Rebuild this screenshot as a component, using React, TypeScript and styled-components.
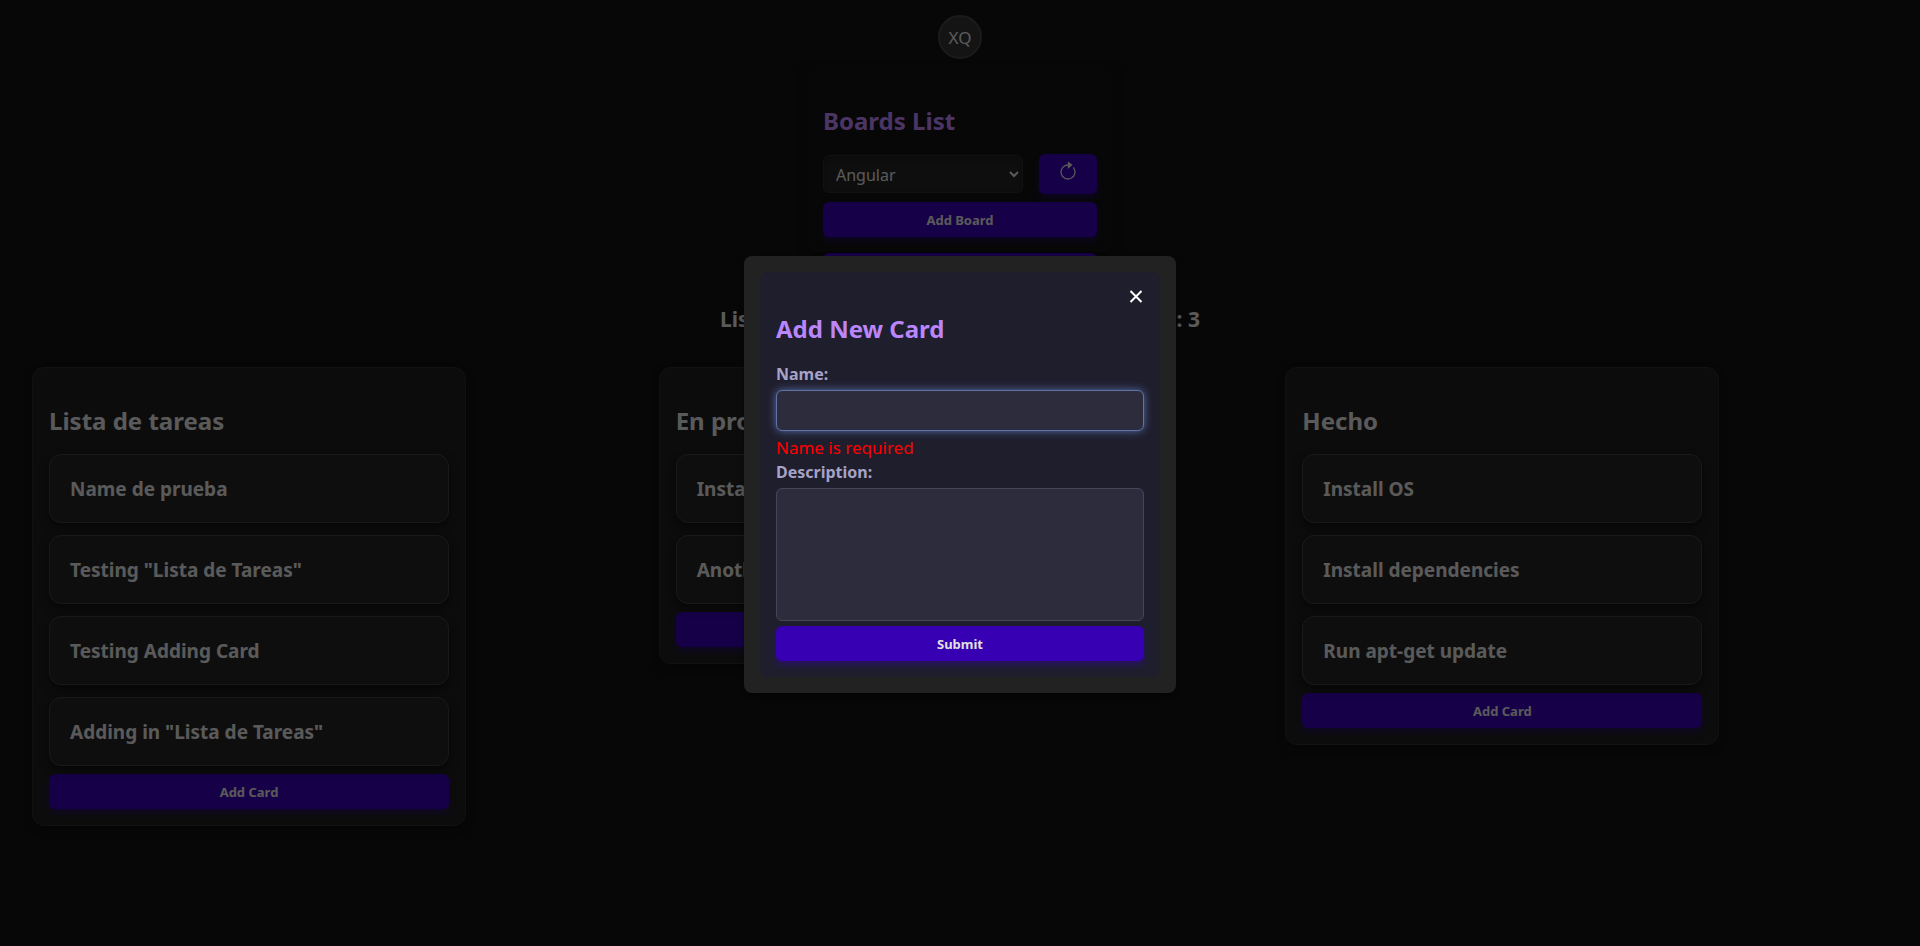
import React, { useId } from "react";
import styled, { createGlobalStyle } from "styled-components";

const GlobalStyle = createGlobalStyle`
  * { box-sizing: border-box; }
  body {
    margin: 0;
    background: #121212;
    color: #e0e0e0;
    font-family: "Noto Sans", sans-serif;
    font-size: 16px;
    line-height: 24px;
  }
  button, input, select, textarea { font-family: inherit; }
`;

const Page = styled.div`
  min-height: 100vh;
`;

const Header = styled.header`
  display: flex;
  justify-content: center;
  padding: 15px 0 5px;
`;

const Avatar = styled.button`
  width: 44px;
  height: 44px;
  padding: 0;
  border: 2px solid #444444;
  border-radius: 50%;
  background: #333333;
  color: #e0e0e0;
  font-size: 17px;
`;

const BoardsPanel = styled.section`
  display: flex;
  flex-direction: column;
  width: 306px;
  height: 188px;
  margin: 0 auto;
  padding: 20px 16px 16px;
  border-radius: 8px;
  box-shadow: 0 4px 8px rgba(0, 0, 0, 0.5);
`;

const Title = styled.h2<{ $accent?: boolean }>`
  margin: 20px 0 16px;
  font-size: 24px;
  line-height: 34px;
  font-weight: 700;
  color: ${(p) => (p.$accent ? "#bb86fc" : "inherit")};
`;

const PickerRow = styled.div`
  display: flex;
  align-items: center;
  gap: 16px;
  margin-bottom: 8px;
`;

const BoardSelect = styled.select`
  flex: 1;
  height: 38px;
  padding: 1px 8px 0;
  border: 1px solid #2c2c2c;
  border-radius: 6px;
  background: #242424;
  color: #e0e0e0;
  font-size: 16px;
  box-shadow: inset 0 2px 6px rgba(0, 0, 0, 0.3);
`;

const PrimaryButton = styled.button`
  display: block;
  flex: none;
  width: 100%;
  height: 35px;
  padding: 0 16px;
  border: 0;
  border-radius: 6px;
  background: #3700b3;
  color: #e0e0e0;
  font-size: 13px;
  font-weight: 700;
  box-shadow: 0 4px 6px rgba(55, 0, 179, 0.4);
`;

const RefreshButton = styled(PrimaryButton)`
  display: flex;
  justify-content: center;
  align-items: flex-start;
  width: 58px;
  height: 40px;
  padding-top: 8px;
`;

const ButtonStack = styled.div`
  display: flex;
  flex-direction: column;
  gap: 16px;
`;

const Summary = styled.h3`
  display: flex;
  justify-content: space-between;
  width: 480px;
  margin: 51px auto 32px;
  font-size: 21px;
  line-height: 32px;
  font-weight: 700;
`;

const Columns = styled.main`
  display: grid;
  grid-template-columns: repeat(3, 1fr);
  align-items: start;
  padding: 0 8px 32px 32px;
`;

const Column = styled.section`
  width: 434px;
  padding: 16px;
  border: 1px solid #2c2c2c;
  border-radius: 12px;
  background: #1e1e1e;
  box-shadow: 0 4px 8px rgba(0, 0, 0, 0.3);
`;

const CardList = styled.ul`
  display: flex;
  flex-direction: column;
  gap: 12px;
  margin: 0 0 8px;
  padding: 0;
  list-style: none;
`;

const Card = styled.li`
  display: flex;
  align-items: center;
  height: 69px;
  padding: 0 20px;
  border: 1px solid #404040;
  border-radius: 12px;
  background: #242424;
  box-shadow: 0 4px 8px rgba(0, 0, 0, 0.5);
  font-size: 19px;
  font-weight: 700;
`;

const Overlay = styled.div`
  position: fixed;
  inset: 0;
  display: flex;
  align-items: center;
  justify-content: center;
  padding: 19px 16px 16px;
  background: rgba(0, 0, 0, 0.6);
`;

const Dialog = styled.div`
  width: 432px;
  padding: 16px;
  border-radius: 8px;
  background: #222222;
  box-shadow: 0 4px 8px rgba(0, 0, 0, 0.4);
`;

const CardForm = styled.form`
  display: flex;
  flex-direction: column;
  padding: 16px;
  border-radius: 8px;
  background: #1f1e2d;
`;

const CloseButton = styled.button`
  align-self: flex-end;
  display: flex;
  width: 16px;
  height: 16px;
  padding: 0;
  border: 0;
  background: none;
  color: #ffffff;
`;

const FormTitle = styled(Title)`
  margin-top: 8px;
`;

const Label = styled.label`
  color: #a6a3c8;
  font-weight: 700;
  margin-bottom: 4px;
`;

const TextInput = styled.input`
  height: 41px;
  padding: 0 12px;
  border: 1px solid #6272a4;
  border-radius: 6px;
  outline: none;
  background: #2d2c3d;
  color: #e0e0e0;
  font-size: 16px;
  box-shadow: 0 0 8px rgba(98, 130, 200, 0.8);
`;

const ErrorText = styled.span`
  margin-top: 5px;
  color: #ff0000;
  font-size: 17px;
`;

const TextArea = styled.textarea`
  height: 133px;
  margin-bottom: 5px;
  padding: 12px;
  border: 1px solid #44475a;
  border-radius: 6px;
  outline: none;
  resize: none;
  background: #2d2c3d;
  color: #e0e0e0;
  font-size: 16px;
`;

const columns = [
  {
    title: "Lista de tareas",
    cards: ["Name de prueba", 'Testing "Lista de Tareas"', "Testing Adding Card", 'Adding in "Lista de Tareas"'],
  },
  { title: "En proceso", cards: ["Install Angular", "Another card"] },
  { title: "Hecho", cards: ["Install OS", "Install dependencies", "Run apt-get update"] },
];

const RefreshIcon = () => (
  <svg width="16" height="18" viewBox="0 0 16 18" fill="none" stroke="currentColor" strokeWidth="1.3" aria-hidden="true">
    <path d="M13.3 5.4A7 7 0 1 1 8.5 3" />
    <path d="M8.5 0.5L11.5 3L8.5 5.5Z" fill="currentColor" />
  </svg>
);

const CloseIcon = () => (
  <svg width="16" height="16" viewBox="0 0 16 16" fill="none" stroke="currentColor" strokeWidth="2" aria-hidden="true">
    <path d="M2.5 3L13.5 14M13.5 3L2.5 14" />
  </svg>
);

export default function App() {
  const id = useId();
  return (
    <>
      <GlobalStyle />
      <Page>
        <Header>
          <Avatar type="button">XQ</Avatar>
        </Header>
        <BoardsPanel>
          <Title $accent>Boards List</Title>
          <PickerRow>
            <BoardSelect aria-label="Board" defaultValue="Angular">
              <option>Angular</option>
            </BoardSelect>
            <RefreshButton type="button" aria-label="Refresh boards">
              <RefreshIcon />
            </RefreshButton>
          </PickerRow>
          <ButtonStack>
            <PrimaryButton type="button">Add Board</PrimaryButton>
            <PrimaryButton type="button">Add List</PrimaryButton>
          </ButtonStack>
        </BoardsPanel>
        <Summary>
          <span>Lists of board</span>
          <span>Total: 3</span>
        </Summary>
        <Columns>
          {columns.map((column) => (
            <Column key={column.title}>
              <Title>{column.title}</Title>
              <CardList>
                {column.cards.map((card) => (
                  <Card key={card}>{card}</Card>
                ))}
              </CardList>
              <PrimaryButton type="button">Add Card</PrimaryButton>
            </Column>
          ))}
        </Columns>
      </Page>
      <Overlay>
        <Dialog role="dialog" aria-modal="true" aria-labelledby={`${id}-title`}>
          <CardForm>
            <CloseButton type="button" aria-label="Close">
              <CloseIcon />
            </CloseButton>
            <FormTitle $accent id={`${id}-title`}>Add New Card</FormTitle>
            <Label htmlFor={`${id}-name`}>Name:</Label>
            <TextInput id={`${id}-name`} aria-describedby={`${id}-error`} />
            <ErrorText id={`${id}-error`}>Name is required</ErrorText>
            <Label htmlFor={`${id}-description`}>Description:</Label>
            <TextArea id={`${id}-description`} />
            <PrimaryButton type="submit">Submit</PrimaryButton>
          </CardForm>
        </Dialog>
      </Overlay>
    </>
  );
}
